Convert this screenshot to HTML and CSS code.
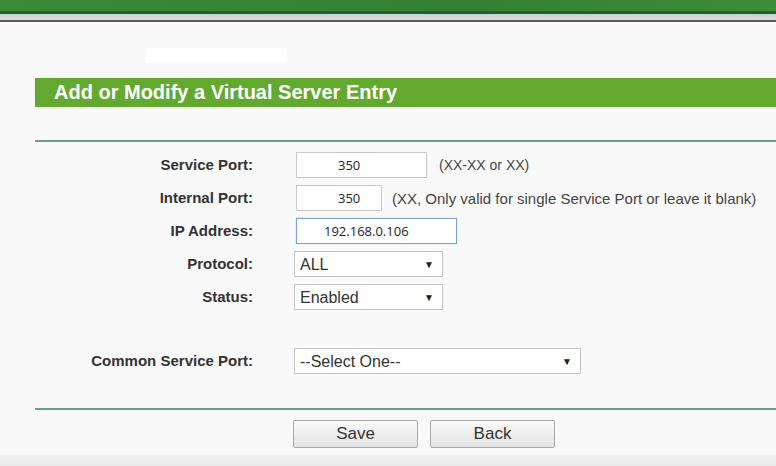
FILE: index.html
```html
<!DOCTYPE html>
<html lang="en">
<head>
  <meta charset="UTF-8" />
  <title>Virtual Servers</title>
  <link rel="stylesheet" href="styles.css">
</head>
<body>

  <div class="topbar"></div>
  <div class="topbar-shade"></div>

  <div class="page">
    <div class="blank-box"></div>

    <div class="title-bar">Add or Modify a Virtual Server Entry</div>
    <div class="line"></div>

    <div class="form">
      <label>Service Port:</label>
      <div class="field">
        <input type="text" class="port-wide" value="350" />
        <span class="hint">(XX-XX or XX)</span>
      </div>

      <label>Internal Port:</label>
      <div class="field">
        <input type="text" class="port-small" value="350" />
        <span class="hint hint-near">(XX, Only valid for single Service Port or leave it blank)</span>
      </div>

      <label>IP Address:</label>
      <div class="field">
        <input type="text" class="ip focus" value="192.168.0.106" />
      </div>

      <label>Protocol:</label>
      <div class="field">
        <div class="select">ALL<span class="arrow">&#9660;</span></div>
      </div>

      <label>Status:</label>
      <div class="field">
        <div class="select">Enabled<span class="arrow">&#9660;</span></div>
      </div>
    </div>

    <div class="form common">
      <label>Common Service Port:</label>
      <div class="field">
        <div class="select select-wide">--Select One--<span class="arrow">&#9660;</span></div>
      </div>
    </div>

    <div class="line line-bottom"></div>

    <div class="buttons">
      <button>Save</button>
      <button>Back</button>
    </div>
  </div>

  <div class="footer-shade"></div>

</body>
</html>
```

FILE: styles.css
```css
body {
  margin: 0;
  background: #f9f9f9;
  font-family: "Liberation Sans", Arial, sans-serif;
  color: #333;
  overflow: hidden;
}

.topbar {
  height: 11px;
  background: linear-gradient(to right, #3a8a38, #338034 60%, #3d8c38);
  border-bottom: 3px solid #1f6131;
}

.topbar-shade {
  height: 6px;
  background: linear-gradient(to bottom, #c9d3c9, #dcdcdc);
  border-bottom: 2px solid #5a5a5a;
}

.page {
  padding-left: 35px;
}

.blank-box {
  width: 141px;
  height: 15px;
  background: #ffffff;
  margin: 26px 0 15px 111px;
}

.title-bar {
  height: 29px;
  line-height: 29px;
  background: #63a92f;
  color: #fff;
  font-size: 20px;
  font-weight: bold;
  padding-left: 19px;
}

.line {
  height: 2px;
  background: #6e9d8d;
  margin-top: 33px;
}

.form {
  display: grid;
  grid-template-columns: 218px auto;
  column-gap: 43px;
  row-gap: 7px;
  grid-auto-rows: 26px;
  margin-top: 10px;
}

.form label {
  text-align: right;
  font-size: 15px;
  font-weight: bold;
  color: #333;
  line-height: 26px;
}

.field {
  display: flex;
  align-items: center;
}

input[type="text"] {
  height: 26px;
  box-sizing: border-box;
  border: 1px solid #c8c8c8;
  background: #fff;
  font-family: "Open Sans", "Noto Sans", sans-serif;
  font-size: 13px;
  color: #222;
  padding: 0;
  margin: 0;
}

.port-wide {
  width: 131px;
  padding-left: 41px !important;
}

.port-small {
  width: 86px;
  padding-left: 41px !important;
}

.ip {
  width: 161px;
  padding-left: 27px !important;
}

.focus {
  border: 1px solid #7e9fd6 !important;
  box-shadow: 0 0 1px #a9c0e8;
}

.hint {
  font-size: 14px;
  color: #444;
  margin-left: 12px;
}

.hint-near {
  font-size: 15px;
  margin-left: 10px;
}

.select {
  position: relative;
  width: 149px;
  height: 26px;
  box-sizing: border-box;
  border: 1px solid #c4c4c4;
  background: #fff;
  margin-left: -2px;
  font-size: 16px;
  color: #333;
  line-height: 25px;
  padding-left: 5px;
}

.select-wide {
  width: 287px;
}

.arrow {
  position: absolute;
  right: 8px;
  top: 0;
  font-size: 10px;
  color: #222;
}

.common {
  margin-top: 38px;
}

.line-bottom {
  margin-top: 34px;
}

.buttons {
  display: flex;
  gap: 12px;
  margin: 10px 0 0 258px;
}

button {
  width: 125px;
  height: 28px;
  border: 1px solid #a9a9a9;
  border-radius: 2px;
  background: linear-gradient(to bottom, #fafafa, #e4e4e4);
  font-family: "Liberation Sans", Arial, sans-serif;
  font-size: 17px;
  color: #333;
  padding: 0;
}

.footer-shade {
  height: 20px;
  margin-top: 7px;
  background: linear-gradient(to bottom, #f2f2f2, #e2e2e2);
}
```
